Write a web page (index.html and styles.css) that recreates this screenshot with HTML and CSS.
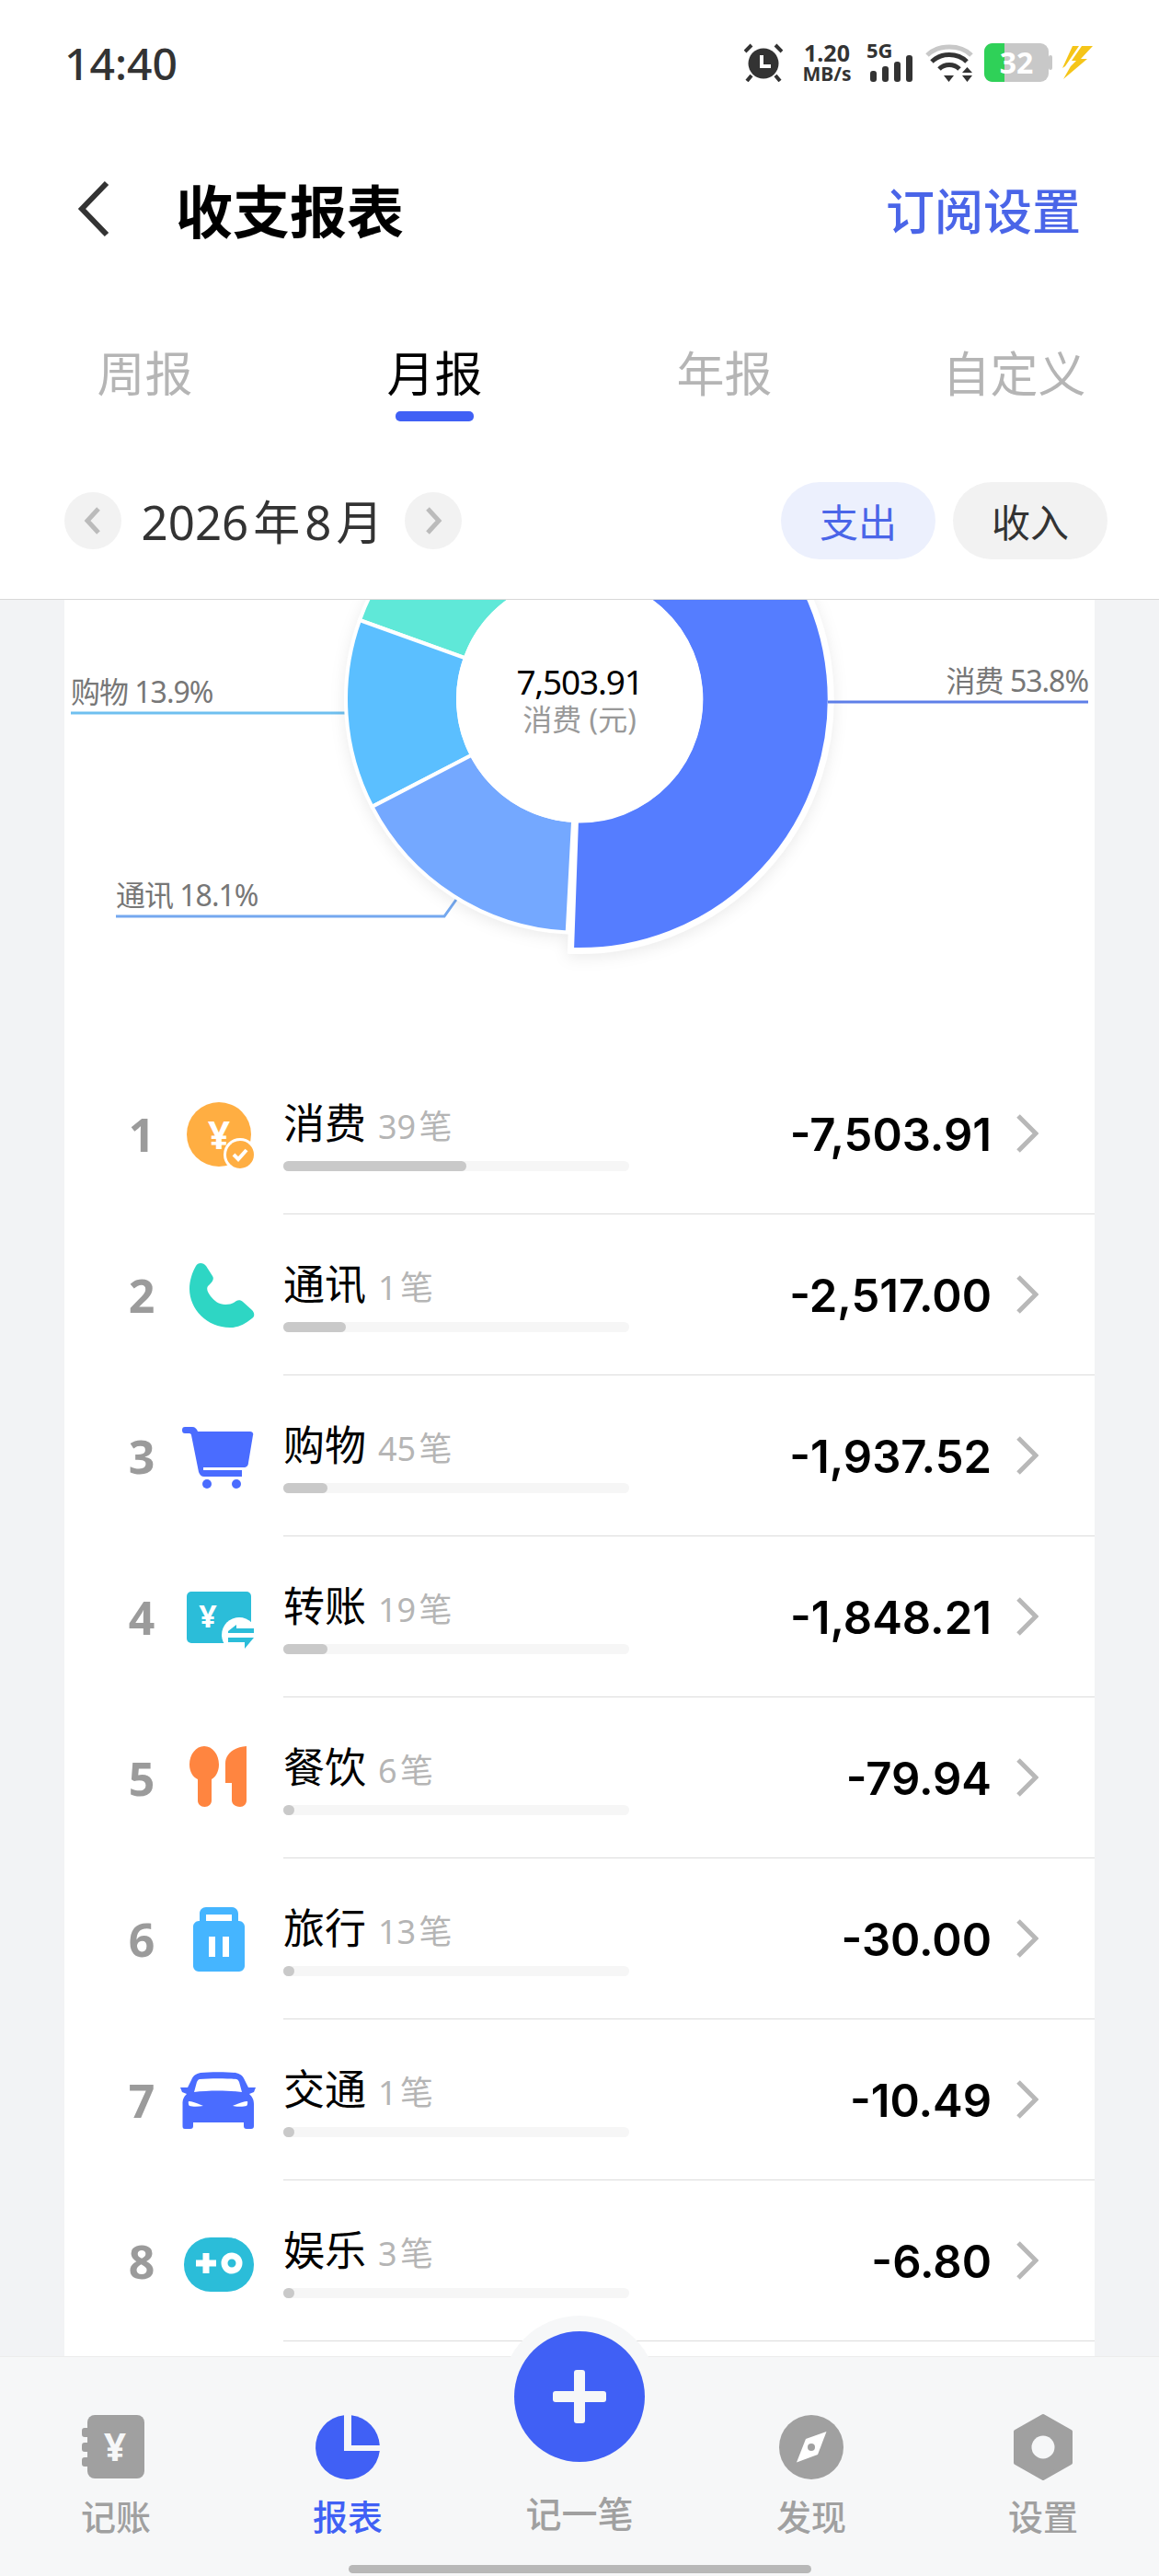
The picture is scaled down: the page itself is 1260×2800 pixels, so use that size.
FILE: index.html
```html
<!DOCTYPE html>
<html lang="zh-CN">

<head>
    <meta charset="UTF-8">
    <meta name="viewport" content="width=device-width, initial-scale=1.0">
    <title>收支报表</title>
    <link rel="stylesheet" href="styles.css">
</head>

<body>
    <div class="top">
        <div class="status-bar">
            <div class="time">14:40</div>
            <div class="status-icons">
                <svg class="alarm" width="42" height="42" viewBox="0 0 42 42">
                    <circle cx="21" cy="22" r="16.5" fill="#333" />
                    <path d="M1 9 8 2M41 9 34 2M8 35 3 41M34 35 39 41" stroke="#333" stroke-width="4" fill="none" />
                    <path d="M19 13V25H29" stroke="#fff" stroke-width="4" fill="none" />
                </svg>
                <div class="speed"><span>1.20</span><span class="speed-unit">MB/s</span></div>
                <svg class="signal" width="50" height="42" viewBox="0 0 50 42">
                    <text class="net-type" x="0" y="16">5G</text>
                    <rect x="4" y="30" width="7" height="12" rx="3" fill="#333" />
                    <rect x="17" y="25" width="7" height="17" rx="3" fill="#333" />
                    <rect x="30" y="20" width="7" height="22" rx="3" fill="#333" />
                    <rect x="43" y="13" width="7" height="29" rx="3" fill="#333" />
                </svg>
                <svg class="wifi" width="52" height="42" viewBox="0 0 52 42">
                    <path d="M2 13C14 1 38 1 50 13" stroke="#c8c8c8" stroke-width="5" fill="none" />
                    <path d="M7 20C17 10 35 10 45 20" stroke="#333" stroke-width="5" fill="none" />
                    <path d="M15 28C21 22 31 22 37 28" stroke="#333" stroke-width="5" fill="none" />
                    <path d="M20 35H31L25.500 42ZM45.500 26 51 32H40ZM40 35H51L45.500 42Z" fill="#333" />
                </svg>
                <svg class="battery" width="74" height="42" viewBox="0 0 74 42">
                    <rect x="0" y="0" width="70" height="42" rx="9" fill="#c8c8c8" />
                    <rect x="70" y="13" width="4" height="16" rx="2" fill="#c8c8c8" />
                    <path d="M22 0H9C4 0 0 4 0 9V33C0 38 4 42 9 42H22Z" fill="#2fd158" />
                    <text class="battery-num" x="35" y="33">32</text>
                </svg>
                <svg class="bolt" width="35" height="36" viewBox="0 0 35 36">
                    <path d="M13 0H20L5 22 2 24ZM23 0H35L22 14H29L3 36 11 22 17 16H12Z" fill="#f5c518" />
                </svg>
            </div>
        </div>

        <div class="nav-bar">
            <svg width="40" height="64" viewBox="0 0 40 64">
                <path d="M34 4 7 32 34 60" stroke="#333" stroke-width="6" fill="none" />
            </svg>
            <div class="nav-title">收支报表</div>
            <div class="nav-action">订阅设置</div>
        </div>

        <div class="tabs">
            <div class="tab">周报</div>
            <div class="tab tab-active">月报</div>
            <div class="tab">年报</div>
            <div class="tab">自定义</div>
        </div>

        <div class="date-row">
            <div class="date-btn">
                <svg width="20" height="32" viewBox="0 0 20 32">
                    <path d="M16 3 4 16 16 29" stroke="#bbb" stroke-width="5" fill="none" />
                </svg>
            </div>
            <div class="date-text">2026<span class="date-unit">年</span>8<span class="date-unit">月</span></div>
            <div class="date-btn">
                <svg width="20" height="32" viewBox="0 0 20 32">
                    <path d="M4 3 16 16 4 29" stroke="#bbb" stroke-width="5" fill="none" />
                </svg>
            </div>
            <div class="type-switch">
                <div class="type-btn type-active">支出</div>
                <div class="type-btn">收入</div>
            </div>
        </div>
    </div>

    <div class="content">
        <div class="card">
            <svg class="chart" width="1120" height="493" viewBox="0 0 1120 493">
                <path d="M7 123H320" stroke="#6fc0f0" stroke-width="3" fill="none" />
                <path d="M56 344H413L428 323" stroke="#74a8ef" stroke-width="3" fill="none" />
                <g class="pie">
                    <path d="M321 22A254 254 0 0 1 502.800 -139.500L530.300 -20.600A132 132 0 0 0 435.800 63.300Z" fill="#5fe8d8" stroke="#fff" stroke-width="4" />
                    <path d="M334.500 224.900A254 254 0 0 1 321 22L435.800 63.300A132 132 0 0 0 442.800 168.700Z" fill="#5bbfff" stroke="#fff" stroke-width="4" />
                    <path d="M546.700 361.600A254 254 0 0 1 334.500 224.900L442.800 168.700A132 132 0 0 0 553.100 239.800Z" fill="#74a8ff" stroke="#fff" stroke-width="4" />
                    <path d="M498.500 -158.500A273.500 273.500 0 1 1 550.500 381.400L555.500 239A131 131 0 1 0 530.500 -19.600Z" fill="#557dff" stroke="#fff" stroke-width="7" />
                </g>
                <path d="M830 111H1113" stroke="#5e7fe8" stroke-width="3" fill="none" />
                <circle cx="560" cy="108" r="134" fill="#fff" />
                <text class="chart-total" x="560" y="103">7,503.91</text>
                <text class="chart-unit" x="560" y="142">消费 (元)</text>
                <text class="chart-label" x="1113" y="100" text-anchor="end">消费 53.8%</text>
                <text class="chart-label" x="7" y="112">购物 13.9%</text>
                <text class="chart-label" x="56" y="333">通讯 18.1%</text>
            </svg>

            <div class="row">
                <div class="rank">1</div>
                <svg class="cat-icon" width="80" height="80" viewBox="0 0 80 80">
                    <circle cx="40" cy="40" r="35" fill="#ffae42" />
                    <text class="yen" x="40" y="56" fill="#fff">¥</text>
                    <circle cx="63" cy="62" r="18" fill="#fff" />
                    <circle cx="63" cy="62" r="15" fill="#ffae42" />
                    <path d="M56 62 61 67 70 57" stroke="#fff" stroke-width="4" fill="none" />
                </svg>
                <div class="row-main">
                    <div class="row-body">
                        <div class="row-title"><span class="row-name">消费</span><span class="row-count">39 笔</span></div>
                        <div class="bar"><div class="bar-fill" style="width: 199px"></div></div>
                    </div>
                    <div class="amount">-7,503.91</div>
                    <svg class="row-arrow" width="24" height="42" viewBox="0 0 24 42">
                        <path d="M2 2 21 21 2 40" stroke="#b8b8b8" stroke-width="5" fill="none" />
                    </svg>
                </div>
            </div>

            <div class="row">
                <div class="rank">2</div>
                <svg class="cat-icon" width="80" height="80" viewBox="0 0 80 80">
                    <path d="M15 8C17 4 23 4 26 8L33 19C35 22 33 25 31 27L28 30C26 33 28 37 31 41C35 46 40 50 47 50C51 50 54 49 56 48L59 46C61 45 64 45 66 47L76 56C79 59 79 63 76 65C68 72 60 75 52 75C27 75 8 55 8 33C8 24 11 15 15 8Z" fill="#2ed6c4" />
                </svg>
                <div class="row-main">
                    <div class="row-body">
                        <div class="row-title"><span class="row-name">通讯</span><span class="row-count">1 笔</span></div>
                        <div class="bar"><div class="bar-fill" style="width: 68px"></div></div>
                    </div>
                    <div class="amount">-2,517.00</div>
                    <svg class="row-arrow" width="24" height="42" viewBox="0 0 24 42">
                        <path d="M2 2 21 21 2 40" stroke="#b8b8b8" stroke-width="5" fill="none" />
                    </svg>
                </div>
            </div>

            <div class="row">
                <div class="rank">3</div>
                <svg class="cat-icon" width="80" height="80" viewBox="0 0 80 80">
                    <path d="M3 8H11C14 8 16 10 17 13H74C76 13 78 15 77 17L72 47C72 50 70 52 67 52H23V55H65V62H24C21 62 19 60 18 57L10 17C10 16 9 15 8 15H3C1 15 0 14 0 11.500S1 8 3 8Z" fill="#4a6cff" />
                    <circle cx="27" cy="70" r="5" fill="#4a6cff" />
                    <circle cx="59" cy="70" r="5" fill="#4a6cff" />
                </svg>
                <div class="row-main">
                    <div class="row-body">
                        <div class="row-title"><span class="row-name">购物</span><span class="row-count">45 笔</span></div>
                        <div class="bar"><div class="bar-fill" style="width: 48px"></div></div>
                    </div>
                    <div class="amount">-1,937.52</div>
                    <svg class="row-arrow" width="24" height="42" viewBox="0 0 24 42">
                        <path d="M2 2 21 21 2 40" stroke="#b8b8b8" stroke-width="5" fill="none" />
                    </svg>
                </div>
            </div>

            <div class="row">
                <div class="rank">4</div>
                <svg class="cat-icon" width="80" height="80" viewBox="0 0 80 80">
                    <rect x="5" y="12" width="70" height="56" rx="5" fill="#2bbdd9" />
                    <text class="yen yen-small" x="28" y="51" fill="#fff">¥</text>
                    <circle cx="62" cy="59" r="19" fill="#fff" />
                    <path d="M50 55 59 48V52H78V57H50Z" fill="#2bbdd9" />
                    <path d="M50 62H78L68 74V67H50Z" fill="#2bbdd9" />
                </svg>
                <div class="row-main">
                    <div class="row-body">
                        <div class="row-title"><span class="row-name">转账</span><span class="row-count">19 笔</span></div>
                        <div class="bar"><div class="bar-fill" style="width: 48px"></div></div>
                    </div>
                    <div class="amount">-1,848.21</div>
                    <svg class="row-arrow" width="24" height="42" viewBox="0 0 24 42">
                        <path d="M2 2 21 21 2 40" stroke="#b8b8b8" stroke-width="5" fill="none" />
                    </svg>
                </div>
            </div>

            <div class="row">
                <div class="rank">5</div>
                <svg class="cat-icon" width="80" height="80" viewBox="0 0 80 80">
                    <path d="M24 5C33 5 40 14 40 25C40 33 36 39 32 41V64C32 68 29 71 24.500 71C20 71 17 68 17 64V41C12 39 8 33 8 25C8 14 15 5 24 5Z" fill="#ff8540" />
                    <path d="M70 5V64C70 68 67 71 63 71C58 71 54 68 54 64V45H47V24C47 13 57 6 70 5Z" fill="#ff8540" />
                </svg>
                <div class="row-main">
                    <div class="row-body">
                        <div class="row-title"><span class="row-name">餐饮</span><span class="row-count">6 笔</span></div>
                        <div class="bar"><div class="bar-fill" style="width: 12px"></div></div>
                    </div>
                    <div class="amount">-79.94</div>
                    <svg class="row-arrow" width="24" height="42" viewBox="0 0 24 42">
                        <path d="M2 2 21 21 2 40" stroke="#b8b8b8" stroke-width="5" fill="none" />
                    </svg>
                </div>
            </div>

            <div class="row">
                <div class="rank">6</div>
                <svg class="cat-icon" width="80" height="80" viewBox="0 0 80 80">
                    <path d="M26 5H54C58 5 61 8 61 12V20H62C65 20 68 23 68 26V69C68 72 65 75 62 75H18C15 75 12 72 12 69V26C12 23 15 20 18 20H19V12C19 8 22 5 26 5ZM26 13V20H54V13Z" fill="#45b5ff" fill-rule="evenodd" />
                    <rect x="29" y="37" width="7" height="22" fill="#fff" />
                    <rect x="44" y="37" width="7" height="22" fill="#fff" />
                </svg>
                <div class="row-main">
                    <div class="row-body">
                        <div class="row-title"><span class="row-name">旅行</span><span class="row-count">13 笔</span></div>
                        <div class="bar"><div class="bar-fill" style="width: 12px"></div></div>
                    </div>
                    <div class="amount">-30.00</div>
                    <svg class="row-arrow" width="24" height="42" viewBox="0 0 24 42">
                        <path d="M2 2 21 21 2 40" stroke="#b8b8b8" stroke-width="5" fill="none" />
                    </svg>
                </div>
            </div>

            <div class="row">
                <div class="rank">7</div>
                <svg class="cat-icon" width="80" height="80" viewBox="0 0 80 80">
                    <path d="M20 10C30 9 48 9 58 10C63 11 66 13 68 18L72 26H80L78 31 73 33C77 37 78 40 78 44V68C78 70 77 71 75 71H70C68 71 67 70 67 68V64H12V68C12 70 11 71 9 71H3C1 71 0.500 70 0.500 68V44C0.500 40 1 37 5 33L0 31-2 26H6L10 18C12 13 15 11 20 10Z" fill="#4a6cff" />
                    <path d="M19 17C30 16 48 16 59 17C60 17 61 18 62 20L65 31C50 29 28 29 13 31L16 20C17 18 18 17 19 17Z" fill="#fff" />
                    <path d="M7 41C11 41 18 44 23 46C18 47 11 47 8 46C7 45 6.500 43 7 41Z" fill="#fff" />
                    <path d="M71 41C67 41 60 44 55 46C60 47 67 47 70 46C71 45 71.500 43 71 41Z" fill="#fff" />
                </svg>
                <div class="row-main">
                    <div class="row-body">
                        <div class="row-title"><span class="row-name">交通</span><span class="row-count">1 笔</span></div>
                        <div class="bar"><div class="bar-fill" style="width: 12px"></div></div>
                    </div>
                    <div class="amount">-10.49</div>
                    <svg class="row-arrow" width="24" height="42" viewBox="0 0 24 42">
                        <path d="M2 2 21 21 2 40" stroke="#b8b8b8" stroke-width="5" fill="none" />
                    </svg>
                </div>
            </div>

            <div class="row">
                <div class="rank">8</div>
                <svg class="cat-icon" width="80" height="80" viewBox="0 0 80 80">
                    <rect x="2" y="14" width="76" height="59" rx="29" fill="#2bbdd9" />
                    <path d="M15 42H37M26 31V53" stroke="#fff" stroke-width="7" fill="none" />
                    <circle cx="54" cy="42" r="8" fill="#2bbdd9" stroke="#fff" stroke-width="7" />
                </svg>
                <div class="row-main">
                    <div class="row-body">
                        <div class="row-title"><span class="row-name">娱乐</span><span class="row-count">3 笔</span></div>
                        <div class="bar"><div class="bar-fill" style="width: 12px"></div></div>
                    </div>
                    <div class="amount">-6.80</div>
                    <svg class="row-arrow" width="24" height="42" viewBox="0 0 24 42">
                        <path d="M2 2 21 21 2 40" stroke="#b8b8b8" stroke-width="5" fill="none" />
                    </svg>
                </div>
            </div>
        </div>
    </div>

    <div class="tabbar">
        <div class="add-halo"></div>
        <div class="add-btn"></div>
        <div class="tabbar-items">
            <div class="tabbar-item">
                <svg width="80" height="80" viewBox="0 0 80 80">
                    <rect x="9" y="5" width="62" height="69" rx="8" fill="#a0a0a0" />
                    <path d="M9 19H6C4 19 3 20 3 22V26C3 28 4 29 6 29H9ZM9 35H6C4 35 3 36 3 38V42C3 44 4 45 6 45H9ZM9 51H6C4 51 3 52 3 54V58C3 60 4 61 6 61H9Z" fill="#a0a0a0" />
                    <text class="yen" x="39" y="55" fill="#f6f7f8">¥</text>
                </svg>
                <div class="tabbar-label">记账</div>
            </div>
            <div class="tabbar-item tabbar-active">
                <svg width="80" height="80" viewBox="0 0 80 80">
                    <path d="M36 5.200V44H74.800A35 35 0 1 1 36 5.200Z" fill="#4060f5" />
                    <path d="M44 5.200A35 35 0 0 1 74.800 38H44Z" fill="#4060f5" />
                </svg>
                <div class="tabbar-label">报表</div>
            </div>
            <div class="tabbar-item">
                <div class="tabbar-spacer"></div>
                <div class="tabbar-label tabbar-add-label">记一笔</div>
            </div>
            <div class="tabbar-item">
                <svg width="80" height="80" viewBox="0 0 80 80">
                    <circle cx="40" cy="40" r="35" fill="#a0a0a0" />
                    <path d="M56.500 23 34 31 24 56.500 47 48Z" fill="#fff" />
                    <circle cx="40" cy="40" r="4" fill="#a0a0a0" />
                </svg>
                <div class="tabbar-label">发现</div>
            </div>
            <div class="tabbar-item">
                <svg width="80" height="80" viewBox="0 0 80 80">
                    <path d="M40 6 70 23V57L40 74 10 57V23ZM40 27.500A12.500 12.500 0 1 0 40 52.500 12.500 12.500 0 1 0 40 27.500Z" fill="#a0a0a0" stroke="#a0a0a0" stroke-width="4" stroke-linejoin="round" fill-rule="evenodd" />
                    <circle cx="40" cy="40" r="12.500" fill="#f6f7f8" />
                </svg>
                <div class="tabbar-label">设置</div>
            </div>
        </div>
        <div class="home-bar"></div>
    </div>
</body>

</html>
```

FILE: styles.css
```css
* {
    box-sizing: border-box;
}

body {
    margin: 0;
    width: 1260px;
    height: 2800px;
    display: flex;
    flex-direction: column;
    overflow: hidden;
    background-color: #fff;
    color: #000;
    font-family: "Noto Sans", "Noto Sans CJK SC", sans-serif;
}

svg {
    display: block;
}

.top {
    background-color: #fff;
    border-bottom: 1px solid #d8d8d8;
    height: 652px;
    flex-shrink: 0;
}

/* status bar */
.status-bar {
    height: 136px;
    padding: 0 72px 0 70px;
    display: flex;
    align-items: center;
    justify-content: space-between;
}

.time {
    font-size: 48px;
    font-weight: 500;
    color: #333;
}

.status-icons {
    display: flex;
    align-items: center;
}

.speed {
    width: 56px;
    margin-left: 20px;
    display: flex;
    flex-direction: column;
    align-items: center;
    font-size: 25px;
    font-weight: 700;
    line-height: 25px;
    color: #333;
}

.speed-unit {
    font-size: 21px;
    line-height: 21px;
    white-space: nowrap;
}

.signal {
    margin-left: 15px;
    overflow: visible;
}

.wifi {
    margin-left: 14px;
}

.battery {
    margin-left: 12px;
}

.bolt {
    margin-left: 9px;
}

.net-type {
    font-family: "Noto Sans", sans-serif;
    font-size: 22px;
    font-weight: 700;
    fill: #333;
}

.battery-num {
    font-family: "Noto Sans", sans-serif;
    font-size: 32px;
    font-weight: 700;
    fill: #fff;
    text-anchor: middle;
}

/* header */
.nav-bar {
    height: 186px;
    padding: 0 85px 4px 82px;
    display: flex;
    align-items: center;
}

.nav-title {
    margin-left: 69px;
    font-size: 62px;
    font-weight: 700;
}

.nav-action {
    margin-left: auto;
    font-size: 53px;
    font-weight: 500;
    color: #4a65e8;
}

.tabs {
    height: 158px;
    padding-top: 54px;
    display: grid;
    grid-template-columns: repeat(4, 1fr);
}

.tab {
    text-align: center;
    font-size: 52px;
    line-height: 60px;
    color: #b5b5b5;
}

.tab-active {
    color: #000;
}

.tab-active::after {
    content: "";
    display: block;
    width: 85px;
    height: 11px;
    margin: 11px auto 0;
    border-radius: 5px;
    background-color: #4060f5;
}

.date-row {
    height: 171px;
    padding: 0 56px 0 70px;
    display: flex;
    align-items: center;
}

.date-btn {
    width: 62px;
    height: 62px;
    border-radius: 50%;
    background-color: #f2f2f2;
    display: flex;
    align-items: center;
    justify-content: center;
}

.date-text {
    width: 308px;
    margin-bottom: 2px;
    padding-left: 3px;
    text-align: center;
    font-size: 51px;
    color: #333;
}

.date-unit {
    margin: 0 5px;
}

.type-switch {
    margin-left: auto;
    display: flex;
    gap: 19px;
}

.type-btn {
    width: 168px;
    height: 84px;
    border-radius: 42px;
    background-color: #f2f2f2;
    display: flex;
    align-items: center;
    justify-content: center;
    font-size: 42px;
    color: #333;
}

.type-active {
    background-color: #ecf0fd;
    color: #4a65e8;
}

/* report */
.content {
    flex: 1;
    min-height: 0;
    padding: 0 70px;
    overflow: hidden;
    background-color: #f2f3f5;
}

.card {
    min-height: 100%;
    background-color: #fff;
}

.pie {
    filter: drop-shadow(0 4px 8px rgba(0, 0, 0, 0.08));
}

.chart-total {
    font-size: 37px;
    letter-spacing: -1.2px;
    text-anchor: middle;
}

.chart-unit {
    font-size: 32px;
    fill: #999;
    text-anchor: middle;
}

.chart-label {
    font-size: 32px;
    letter-spacing: -1px;
    fill: #777;
}

.yen {
    font-family: "Noto Sans", sans-serif;
    font-size: 42px;
    font-weight: 700;
    text-anchor: middle;
}

.yen-small {
    font-size: 34px;
}

.row {
    display: flex;
    align-items: center;
    padding-left: 54px;
}

.rank {
    width: 60px;
    text-align: center;
    font-size: 50px;
    font-weight: 700;
    color: #9b9b9b;
}

.cat-icon {
    margin: 0 30px 0 14px;
    overflow: visible;
    flex-shrink: 0;
}

.row-main {
    flex: 1;
    height: 175px;
    padding-right: 61px;
    border-bottom: 1px solid #dcdcdc;
    display: flex;
    align-items: center;
}

.row-body {
    width: 376px;
}

.row-title {
    height: 60px;
    display: flex;
    align-items: baseline;
}

.row-name {
    font-size: 45px;
    line-height: 60px;
}

.row-count {
    margin-left: 13px;
    font-size: 36px;
    word-spacing: -6px;
    color: #b5b5b5;
}

.bar {
    height: 11px;
    margin-top: 11px;
    border-radius: 6px;
    background-color: #f6f6f6;
}

.bar-fill {
    height: 11px;
    border-radius: 6px;
    background-color: #c9c9c9;
}

.amount {
    flex: 1;
    margin-top: 2px;
    text-align: right;
    font-family: Inter, "Noto Sans", sans-serif;
    font-size: 49px;
    font-weight: 600;
}

.row-arrow {
    margin-left: 27px;
}

/* bottom bar */
.tabbar {
    position: relative;
    height: 239px;
    flex-shrink: 0;
    padding-top: 58px;
    border-top: 1px solid #ececec;
    background-color: #f6f7f8;
}

.add-halo {
    position: absolute;
    top: -45px;
    left: 545px;
    width: 170px;
    height: 170px;
    border-radius: 50%;
    background-color: #f6f7f8;
}

.add-btn {
    position: absolute;
    top: -28px;
    left: 559px;
    width: 142px;
    height: 142px;
    border-radius: 50%;
    background-color: #4060f5;
}

.add-btn::before,
.add-btn::after {
    content: "";
    position: absolute;
    background-color: #f6f7f8;
    border-radius: 3px;
}

.add-btn::before {
    left: 42px;
    top: 65px;
    width: 58px;
    height: 12px;
}

.add-btn::after {
    left: 65px;
    top: 42px;
    width: 12px;
    height: 58px;
}

.tabbar-items {
    position: relative;
    display: grid;
    grid-template-columns: repeat(5, 1fr);
}

.tabbar-item {
    display: flex;
    flex-direction: column;
    align-items: center;
}

.tabbar-spacer {
    height: 80px;
}

.tabbar-label {
    margin-top: 10px;
    font-size: 38px;
    font-weight: 500;
    line-height: 50px;
    color: #a0a0a0;
}

.tabbar-add-label {
    margin-top: 7px;
    font-size: 39px;
}

.tabbar-active .tabbar-label {
    color: #4060f5;
}

.home-bar {
    width: 503px;
    height: 9px;
    margin: 28px auto 0;
    border-radius: 5px;
    background-color: #b8b8b8;
}
```
